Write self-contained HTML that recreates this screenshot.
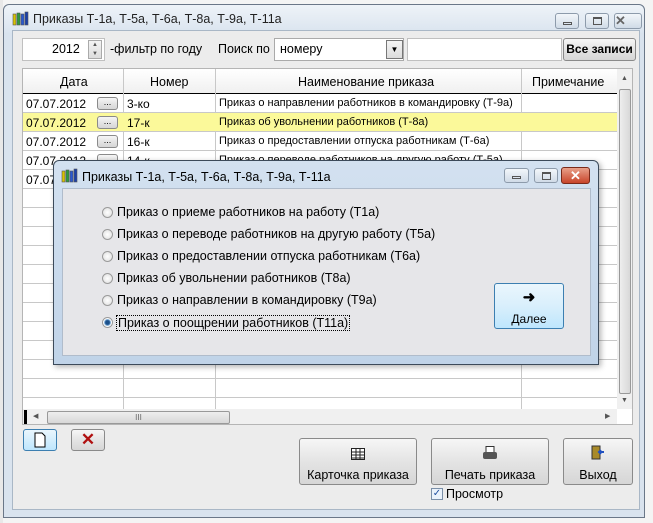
<!DOCTYPE html>
<html><head><meta charset="utf-8"><style>
*{box-sizing:border-box;margin:0;padding:0}
body{width:653px;height:523px;position:relative;overflow:hidden;background:#f4f4f4;font-family:"Liberation Sans",sans-serif;font-size:12px;color:#000}
.a{position:absolute}
.win{left:3px;top:4px;width:642px;height:514px;background:#d9e3ee;border:1px solid #6a7788;border-radius:6px 6px 0 0}
.inner{left:12px;top:30px;width:628px;height:480px;background:#ececec;border:1px solid #a9b7c6}
.btn{position:absolute;background:linear-gradient(#f6f6f6,#e4e4e4 50%,#d6d6d6);border:1px solid #8a8a8a;border-radius:3px;text-align:center}
.grid{left:22px;top:68px;width:611px;height:357px;background:#fff;border:1px solid #b5b5b5;overflow:hidden}
.row{position:absolute;left:0;width:594px;height:19px;border-bottom:1px solid #c8c8c8;font-size:12px}
.row span{position:absolute;top:3px}
.vl{position:absolute;top:0;width:1px;height:340px;background:#c8c8c8}
.rad{position:absolute;left:102px;width:11px;height:11px;border-radius:50%;border:1px solid #9a9a9a;background:radial-gradient(#fff,#dcdcdc)}
.rt{position:absolute;left:117px;font-size:12.5px;white-space:nowrap}
.tb{width:19px;height:14px;border:1px solid #8d9bab;border-radius:3px;background:linear-gradient(#f2f6fa,#d0dbe7)}
</style></head><body>
<div class="a" style="left:0;top:0;width:3px;height:523px;background:#e8e8e8"></div>
<div class="a win"></div>
<div class="a" style="left:4px;top:5px;width:640px;height:28px;background:linear-gradient(#eef3f8,#dae4ef);border-radius:6px 6px 0 0"></div>
<svg class="a" style="left:12px;top:11px" width="18" height="16"><rect x="1" y="3" width="3" height="11" fill="#d9c200" stroke="#555" stroke-width=".6"/><rect x="5" y="2" width="3" height="12" fill="#2d9c3c" stroke="#555" stroke-width=".6"/><rect x="9" y="3" width="3" height="11" fill="#2a58d0" stroke="#555" stroke-width=".6"/><rect x="13" y="1" width="3" height="13" fill="#1a3fa8" stroke="#555" stroke-width=".6"/></svg>
<div class="a" style="left:33px;top:12px;font-size:12.5px;color:#222">Приказы Т-1а, Т-5а, Т-6а, Т-8а, Т-9а, Т-11а</div>
<div class="a tb" style="left:555px;top:13px;width:24px;height:16px"><div class="a" style="left:7px;top:8px;width:9px;height:3px;border:1px solid #555"></div></div>
<div class="a tb" style="left:585px;top:13px;width:24px;height:16px"><div class="a" style="left:7px;top:3px;width:9px;height:8px;border:1px solid #555;border-top-width:2px"></div></div>
<div class="a tb" style="left:614px;top:13px;width:28px;height:16px;font-size:13px;color:#666;line-height:13px;font-weight:bold">✕</div>
<div class="a inner"></div>
<div class="a" style="left:22px;top:38px;width:83px;height:23px;background:#fff;border:1px solid #c0c0c0"></div>
<div class="a" style="left:52px;top:42px;font-size:12.5px">2012</div>
<div class="a" style="left:88px;top:40px;width:14px;height:19px;border:1px solid #aaa;background:linear-gradient(#f4f4f4,#ddd);font-size:6px;color:#555;text-align:center;line-height:9px">▲<br>▼</div>
<div class="a" style="left:110px;top:42px;font-size:12.5px">-фильтр по году</div>
<div class="a" style="left:218px;top:42px;font-size:12.5px">Поиск по</div>
<div class="a" style="left:274px;top:38px;width:130px;height:23px;background:#fff;border:1px solid #aaa"></div>
<div class="a" style="left:280px;top:42px;font-size:12.5px">номеру</div>
<div class="a" style="left:386px;top:40px;width:17px;height:19px;border:1px solid #777;background:linear-gradient(#f4f4f4,#dcdcdc);font-size:8px;text-align:center;line-height:18px">▼</div>
<div class="a" style="left:407px;top:38px;width:155px;height:23px;background:#fff;border:1px solid #c0c0c0"></div>
<div class="btn" style="left:563px;top:38px;width:73px;height:23px;font-weight:bold;font-size:12px;line-height:21px">Все записи</div>
<div class="a grid">
 <div class="a" style="left:0;top:0;width:594px;height:25px;background:linear-gradient(#fff,#f0f0f0);border-bottom:1px solid #000"></div>
 <div class="a" style="left:37px;top:6px;font-size:12.5px">Дата</div>
 <div class="a" style="left:127px;top:6px;font-size:12.5px">Номер</div>
 <div class="a" style="left:275px;top:6px;font-size:12.5px">Наименование приказа</div>
 <div class="a" style="left:509px;top:6px;font-size:12.5px">Примечание</div>
 <div class="vl" style="left:100px"></div><div class="vl" style="left:192px"></div><div class="vl" style="left:498px"></div>
 <div class="row" style="top:25px"><span style="left:3px">07.07.2012</span><span style="left:104px">3-ко</span><span style="left:196px;font-size:11px">Приказ о направлении работников в командировку (Т-9а)</span></div>
 <div class="row" style="top:44px;background:#fbf99a"><span style="left:3px">07.07.2012</span><span style="left:104px">17-к</span><span style="left:196px;font-size:11px">Приказ об увольнении работников (Т-8а)</span></div>
 <div class="row" style="top:63px"><span style="left:3px">07.07.2012</span><span style="left:104px">16-к</span><span style="left:196px;font-size:11px">Приказ о предоставлении отпуска работникам (Т-6а)</span></div>
 <div class="row" style="top:82px"><span style="left:3px">07.07.2012</span><span style="left:104px">14-к</span><span style="left:196px;font-size:11px">Приказ о переводе работников на другую работу (Т-5а)</span></div>
 <div class="row" style="top:101px"><span style="left:3px">07.07.2012</span></div>
 <div class="row" style="top:120px"></div><div class="row" style="top:139px"></div><div class="row" style="top:158px"></div><div class="row" style="top:177px"></div><div class="row" style="top:196px"></div><div class="row" style="top:215px"></div><div class="row" style="top:234px"></div><div class="row" style="top:253px"></div><div class="row" style="top:272px"></div><div class="row" style="top:291px"></div><div class="row" style="top:310px"></div>
 <div class="btn" style="left:74px;top:28px;width:21px;height:13px;font-size:9px;line-height:8px">...</div>
 <div class="btn" style="left:74px;top:47px;width:21px;height:13px;font-size:9px;line-height:8px">...</div>
 <div class="btn" style="left:74px;top:66px;width:21px;height:13px;font-size:9px;line-height:8px">...</div>
 <div class="btn" style="left:74px;top:85px;width:21px;height:13px"></div>
 <div class="a" style="left:594px;top:0;width:16px;height:340px;background:#f0f0f0"></div>
 <div class="a" style="left:598px;top:6px;font-size:7px;color:#555">▲</div>
 <div class="a" style="left:596px;top:20px;width:12px;height:305px;border:1px solid #999;border-radius:2px;background:linear-gradient(90deg,#eee,#d8d8d8)"></div>
 <div class="a" style="left:598px;top:328px;font-size:7px;color:#555">▼</div>
 <div class="a" style="left:0;top:340px;width:594px;height:16px;background:#f0f0f0"></div>
 <div class="a" style="left:1px;top:341px;width:3px;height:14px;background:#000"></div>
 <div class="a" style="left:10px;top:343px;font-size:7px;color:#555">◀</div>
 <div class="a" style="left:24px;top:342px;width:183px;height:13px;border:1px solid #999;border-radius:2px;background:linear-gradient(#eee,#d8d8d8);font-size:8px;text-align:center;line-height:11px;color:#666">III</div>
 <div class="a" style="left:582px;top:343px;font-size:7px;color:#555">▶</div>
</div>
<div class="btn" style="left:23px;top:429px;width:34px;height:22px;border-color:#3c7fb1;background:linear-gradient(#eaf6fd,#bee6fd)"><svg width="14" height="16" style="margin-top:2px"><path d="M2 1h7l3 3v11H2z" fill="#fff" stroke="#000"/></svg></div>
<div class="btn" style="left:71px;top:429px;width:34px;height:22px;color:#b01010;font-size:17px;font-weight:bold;line-height:20px">✕</div>
<div class="btn" style="left:299px;top:438px;width:118px;height:47px;font-size:12.5px"><svg width="14" height="12" style="margin-top:9px"><rect x="0.5" y="0.5" width="13" height="11" fill="#fff" stroke="#222"/><path d="M0 4h14M0 7h14M0 10h14M5 0v12M9 0v12" stroke="#222"/></svg><div style="margin-top:5px">Карточка приказа</div></div>
<div class="btn" style="left:431px;top:438px;width:118px;height:47px;font-size:12.5px"><svg width="16" height="14" style="margin-top:7px"><rect x="4" y="0.5" width="8" height="6" fill="#fff" stroke="#333"/><rect x="1" y="6" width="14" height="7" rx="2" fill="#555"/></svg><div style="margin-top:5px">Печать приказа</div></div>
<div class="btn" style="left:563px;top:438px;width:70px;height:47px;font-size:12.5px"><svg width="14" height="15" style="margin-top:6px"><rect x="1" y="1" width="8" height="13" fill="#a88a2a" stroke="#333"/><path d="M8 7h5M10 5l-2 2 2 2" stroke="#2050c0" stroke-width="2" fill="none"/></svg><div style="margin-top:5px">Выход</div></div>
<div class="a" style="left:431px;top:488px;width:12px;height:12px;border:1px solid #7a8fa8;background:#eaf2fb;font-size:10px;line-height:10px;color:#2050a0;text-align:center">✓</div>
<div class="a" style="left:446px;top:487px;font-size:12.5px">Просмотр</div>
<div class="a" style="left:53px;top:160px;width:546px;height:205px;background:linear-gradient(#d3e1f0,#c0d3e8);border:1px solid #3c4a5a;border-radius:6px 6px 0 0;box-shadow:2px 2px 6px rgba(0,0,0,.3)"></div>
<svg class="a" style="left:61px;top:168px" width="18" height="16"><rect x="1" y="3" width="3" height="11" fill="#d9c200" stroke="#555" stroke-width=".6"/><rect x="5" y="2" width="3" height="12" fill="#2d9c3c" stroke="#555" stroke-width=".6"/><rect x="9" y="3" width="3" height="11" fill="#2a58d0" stroke="#555" stroke-width=".6"/><rect x="13" y="1" width="3" height="13" fill="#1a3fa8" stroke="#555" stroke-width=".6"/></svg>
<div class="a" style="left:82px;top:170px;font-size:12.5px">Приказы Т-1а, Т-5а, Т-6а, Т-8а, Т-9а, Т-11а</div>
<div class="a tb" style="left:504px;top:168px;width:25px;height:15px"><div class="a" style="left:7px;top:7px;width:9px;height:3px;border:1px solid #555"></div></div>
<div class="a tb" style="left:534px;top:168px;width:24px;height:15px"><div class="a" style="left:7px;top:3px;width:9px;height:8px;border:1px solid #555;border-top-width:2px"></div></div>
<div class="a" style="left:561px;top:167px;width:29px;height:17px;border:1px solid #7a2a1a;border-radius:3px;background:linear-gradient(#e8a08a,#c8452a);color:#fff;font-weight:bold;text-align:center;line-height:15px;font-size:13px">✕</div>
<div class="a" style="left:62px;top:188px;width:529px;height:168px;background:#e6e6e9;border:1px solid #b0bccb"></div>
<div class="rad" style="top:207px"></div><div class="rt" style="top:205px">Приказ о приеме работников на работу (Т1а)</div>
<div class="rad" style="top:229px"></div><div class="rt" style="top:227px">Приказ о переводе работников на другую работу (Т5а)</div>
<div class="rad" style="top:251px"></div><div class="rt" style="top:249px">Приказ о предоставлении отпуска работникам (Т6а)</div>
<div class="rad" style="top:273px"></div><div class="rt" style="top:271px">Приказ об увольнении работников (Т8а)</div>
<div class="rad" style="top:295px"></div><div class="rt" style="top:293px">Приказ о направлении в командировку (Т9а)</div>
<div class="rad" style="top:317px;background:radial-gradient(#1a4f8a 30%,#6da0d0 45%,#fff 60%)"></div><div class="rt" style="top:315px;left:116px;border:1px dotted #000;padding:0 1px">Приказ о поощрении работников (Т11а)</div>
<div class="btn" style="left:494px;top:283px;width:70px;height:46px;border-color:#3c7fb1;background:linear-gradient(#eaf6fd,#d9effc 50%,#bee6fd);font-size:12px"><div style="margin-top:4px;font-size:15px;font-weight:bold">➜</div><div style="margin-top:6px">Далее</div></div>
</body></html>
